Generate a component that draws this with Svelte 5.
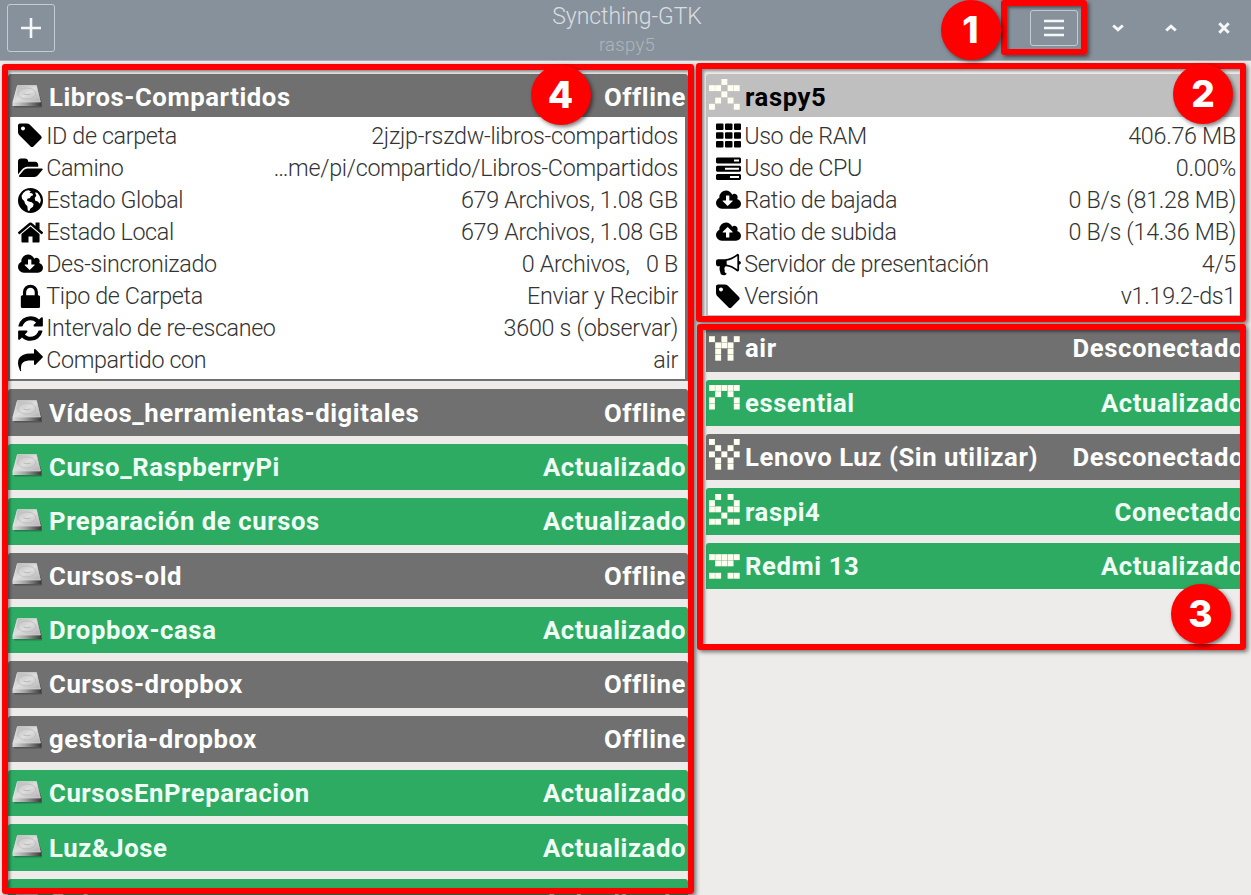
<script>
  const cloud = 'q0 159-112.5 271.5t-271.5 112.5h-1088q-185 0-316.5-131.5t-131.5-316.5q0-130 70-240t188-165q-2-30-2-43 0-212 150-362t362-150q156 0 285.5 87t188.5 231q71-62 166-62 106 0 181 75t75 181q0 76-41 138 130 31 213.5 135.5t83.5 238.5z';
  const icons = {
    tag: ['0 100 1600 1600', 'M448 448q0-53-37.5-90.5t-90.5-37.5-90.5 37.5-37.5 90.5 37.5 90.5 90.5 37.5 90.5-37.5 37.5-90.5zm1067 576q0 53-37 90l-491 492q-39 37-91 37-53 0-90-37l-715-716q-38-37-64.5-101t-26.5-117v-416q0-52 38-90t90-38h416q53 0 117 26.5t102 64.5l715 714q37 39 37 91z'],
    folder: ['0 0 1900 1792', 'M1879 952q0 31-31 66l-336 396q-43 51-120.5 86.5t-143.5 35.5h-1088q-34 0-60.5-13t-26.5-43q0-31 31-66l336-396q43-51 120.5-86.5t143.5-35.5h1088q34 0 60.5 13t26.5 43zm-343-344v160h-832q-94 0-197 47.5t-164 119.5l-337 396-5 6q0-4-.5-12.5t-.5-12.5v-960q0-92 66-158t158-66h320q92 0 158 66t66 158v32h544q92 0 158 66t66 158z'],
    globe: ['0 0 24 24', 'M12 0a12 12 0 1 0 0 24a12 12 0 0 0 0-24zM7.6 2.6L10.2 2.2L12.4 3.4L11 4.8L13.6 5L14.6 7L12.6 7.6L11.4 9.6L9 10.4L8.6 12L10.4 13L13.2 13.6L15 15.4L14.4 18L12 19.6L10.8 22L9.4 21.6L9 17.6L6.8 15L6 12.4L4 10.6L3.4 7.6L5 4.8zM16.4 4.2L18.6 4.6L20.8 7.6L22 11.6L21 15L19 13L16.6 12.2L16 9.6L17.6 7.4z'],
    home: ['100 100 1592 1592', 'M1472 992v480q0 26-19 45t-45 19h-384v-384h-256v384h-384q-26 0-45-19t-19-45v-480q0-1 .5-3t.5-3l575-474 575 474q1 2 1 6zm223-69l-62 74q-8 9-21 11h-3q-13 0-21-7l-692-577-692 577q-12 8-24 7-13-2-21-11l-62-74q-8-10-7-23.5t11-21.5l719-599q32-26 76-26t76 26l244 204v-195q0-14 9-23t23-9h192q14 0 23 9t9 23v408l219 182q10 8 11 21.5t-7 23.5z'],
    down: ['-64 0 1920 1792', 'M1216 928q0-14-9-23t-23-9h-224v-352q0-13-9.5-22.5t-22.5-9.5h-192q-13 0-22.5 9.5t-9.5 22.5v352h-224q-13 0-22.5 9.5t-9.5 22.5q0 14 9 23l352 352q9 9 23 9t23-9l351-351q10-12 10-24zm640 224' + cloud],
    up: ['-64 0 1920 1792', 'M1216 864q0-14-9-23l-352-352q-9-9-23-9t-23 9l-351 351q-10 12-10 24 0 14 9 23t23 9h224v352q0 13 9.5 22.5t22.5 9.5h192q13 0 22.5-9.5t9.5-22.5v-352h224q13 0 22.5-9.5t9.5-22.5zm640 288' + cloud],
    lock: ['150 90 1500 1500', 'M640 768h512v-192q0-106-75-181t-181-75-181 75-75 181v192zm832 96v576q0 40-28 68t-68 28h-960q-40 0-68-28t-28-68v-576q0-40 28-68t68-28h32v-192q0-184 132-316t316-132 316 132 132 316v192h32q40 0 68 28t28 68z'],
    refresh: ['120 120 1552 1552', 'M1639 1056q0 5-1 7-64 268-268 434.5t-478 166.5q-146 0-282.5-55t-243.5-157l-129 129q-19 19-45 19t-45-19-19-45v-448q0-26 19-45t45-19h448q26 0 45 19t19 45-19 45l-137 137q71 66 161 102t187 36q134 0 250-65t186-179q11-17 53-117 8-23 30-23h192q13 0 22.5 9.5t9.5 22.5zm25-800v448q0 26-19 45t-45 19h-448q-26 0-45-19t-19-45 19-45l138-138q-148-137-349-137-134 0-250 65t-186 179q-11 17-53 117-8 23-30 23h-199q-13 0-22.5-9.5t-9.5-22.5v-7q65-268 270-434.5t480-166.5q146 0 284 55.5t245 156.5l130-129q19-19 45-19t45 19 19 45z'],
    share: ['0 0 1800 1792', 'M1792 640q0 26-19 45l-512 512q-19 19-45 19t-45-19-19-45v-256h-224q-98 0-175.5 6t-154 21.5-133 42.5-105.5 69.5-80 101-48.5 138.5-17.5 181q0 55 5 123 0 6 2.5 23.5t2.5 26.5q0 15-8.5 25t-23.5 10q-16 0-28-17-7-9-13-22t-13.5-30-10.5-24q-127-285-127-451 0-199 53-333 162-403 875-403h224v-256q0-26 19-45t45-19 45 19l512 512q19 19 19 45z'],
    grid: ['0 0 25 24', 'M1 0h5.500q1 0 1 1v4.500q0 1-1 1h-5.500q-1 0-1-1v-4.500q0-1 1-1zm9 0h5.500q1 0 1 1v4.500q0 1-1 1h-5.500q-1 0-1-1v-4.500q0-1 1-1zm9 0h5q1 0 1 1v4.500q0 1-1 1h-5q-1 0-1-1v-4.500q0-1 1-1zM1 8.800h5.500q1 0 1 1v4.500q0 1-1 1h-5.500q-1 0-1-1v-4.500q0-1 1-1zm9 0h5.500q1 0 1 1v4.500q0 1-1 1h-5.500q-1 0-1-1v-4.500q0-1 1-1zm9 0h5q1 0 1 1v4.500q0 1-1 1h-5q-1 0-1-1v-4.500q0-1 1-1zM1 17.500h5.500q1 0 1 1v4.500q0 1-1 1h-5.500q-1 0-1-1v-4.500q0-1 1-1zm9 0h5.500q1 0 1 1v4.500q0 1-1 1h-5.500q-1 0-1-1v-4.500q0-1 1-1zm9 0h5q1 0 1 1v4.500q0 1-1 1h-5q-1 0-1-1v-4.500q0-1 1-1z'],
    tasks: ['0 0 25 24', 'M1 1h23l1 1v4l-1 1h-23l-1-1v-4zM18 3v2h5v-2zM1 9.300h23l1 1v4l-1 1h-23l-1-1v-4zM9 11.300v2h14v-2zM1 17.500h23l1 1v4l-1 1h-23l-1-1v-4zM14 19.500v2h9v-2z'],
    horn: ['0 60 1800 1672', 'M1664 640q53 0 90.5 37.5t37.5 90.5-37.5 90.5-90.5 37.5v384q0 52-38 90t-90 38q-417-347-812-380-58 19-91 66t-31 100.5 40 92.5q-20 33-23 65.5t6 58 33.500 55 48 50 61.500 50.500q-29 58-111.500 83t-168.500 11.500-132-55.500q-7-23-29.500-87.500t-32-94.500-23-89-15-101 3.500-98.500 22-110.500h-122q-66 0-113-47t-47-113v-192q0-66 47-113t113-47h480q435 0 896-384 52 0 90 38t38 90v384zm-128 604v-954q-394 302-768 343v270q377 42 768 341z']
  };

  const details = [
    ['tag', 'ID de carpeta', '2jzjp-rszdw-libros-compartidos'],
    ['folder', 'Camino', '…me/pi/compartido/Libros-Compartidos'],
    ['globe', 'Estado Global', '679 Archivos, 1.08 GB'],
    ['home', 'Estado Local', '679 Archivos, 1.08 GB'],
    ['down', 'Des-sincronizado', '0 Archivos,   0 B'],
    ['lock', 'Tipo de Carpeta', 'Enviar y Recibir'],
    ['refresh', 'Intervalo de re-escaneo', '3600 s (observar)'],
    ['share', 'Compartido con', 'air']
  ];
  const stats = [
    ['grid', 'Uso de RAM', '406.76 MB'],
    ['tasks', 'Uso de CPU', '0.00%'],
    ['down', 'Ratio de bajada', '0 B/s (81.28 MB)'],
    ['up', 'Ratio de subida', '0 B/s (14.36 MB)'],
    ['horn', 'Servidor de presentación', '4/5'],
    ['tag', 'Versión', 'v1.19.2-ds1']
  ];
  const folders = [
    ['Libros-Compartidos', 'Offline', details],
    ['Vídeos_herramientas-digitales', 'Offline'],
    ['Curso_RaspberryPi', 'Actualizado'],
    ['Preparación de cursos', 'Actualizado'],
    ['Cursos-old', 'Offline'],
    ['Dropbox-casa', 'Actualizado'],
    ['Cursos-dropbox', 'Offline'],
    ['gestoria-dropbox', 'Offline'],
    ['CursosEnPreparacion', 'Actualizado'],
    ['Luz&Jose', 'Actualizado'],
    ['Gulp', 'Actualizado']
  ];
  const devices = [
    ['raspy5', '', '00100 11011 00100 01010 10001', stats],
    ['air', 'Desconectado', '00000 10101 01110 01010 01010'],
    ['essential', 'Actualizado', '11111 01010 10001 10001 00000'],
    ['Lenovo Luz (Sin utilizar)', 'Desconectado', '10001 01010 10101 01010 01010'],
    ['raspi4', 'Conectado', '01010 10001 11011 00100 11011'],
    ['Redmi 13', 'Actualizado', '00000 11111 01110 00000 11011']
  ];
  const tone = (s) => (s === '' ? 'own' : s === 'Offline' || s === 'Desconectado' ? 'off' : 'on');
</script>

{#snippet rows(list)}
  <div class="body">
    {#each list as [icon, label, value]}
      <div class="row">
        <svg class="glyph" viewBox={icons[icon][0]}><path fill-rule={icon === 'home' ? 'nonzero' : 'evenodd'} d={icons[icon][1]} /></svg>
        <span>{label}</span>
        <span class="value">{value}</span>
      </div>
    {/each}
  </div>
{/snippet}

<div class="window">
  <header>
    <div class="side">
      <button class="add" aria-label="+"><svg width="20" height="20" viewBox="0 0 20 20"><path d="M10 0v20M0 10h20" stroke="#f4f6f7" stroke-width="2.600" /></svg></button>
    </div>
    <div class="titles"><div class="title">Syncthing-GTK</div><div class="sub">raspy5</div></div>
    <div class="side right">
      <button class="menu" aria-label="☰"><svg width="20" height="18" viewBox="0 0 20 18"><path d="M0 2h20M0 9h20M0 16h20" stroke="#f4f6f7" stroke-width="2.600" /></svg></button>
      <svg class="ctl" width="12" height="12" viewBox="0 0 12 12"><path d="M1.200 3.500L6 7.800L10.800 3.500" /></svg>
      <svg class="ctl" width="12" height="12" viewBox="0 0 12 12"><path d="M1.200 8.500L6 4.200L10.800 8.500" /></svg>
      <svg class="ctl" width="12" height="12" viewBox="0 0 12 12"><path d="M1.300 1.300L10.700 10.700M10.700 1.300L1.300 10.700" /></svg>
    </div>
  </header>
  <main>
    <section class="folders">
      {#each folders as [name, status, list]}
        <article class={tone(status)}>
          <div class="head">
            <svg class="disk" viewBox="0 0 30 23">
              <defs>
                <linearGradient id="top" x1="0" y1="0" x2="1" y2="1"><stop offset="0" stop-color="#b4b4b4" /><stop offset=".5" stop-color="#dedede" /><stop offset="1" stop-color="#b0b0b0" /></linearGradient>
                <linearGradient id="front" x1="0" x2="1"><stop offset="0" stop-color="#dcdcdc" /><stop offset=".45" stop-color="#a0a0a0" /><stop offset="1" stop-color="#383838" /></linearGradient>
              </defs>
              <path d="M1 20h29v2.500H3z" fill="#000" opacity=".25" />
              <path d="M5 1h20l4.500 16v4h-29v-4z" fill="url(#front)" />
              <path d="M5.500 .5h19L28.500 17H1.500z" fill="url(#top)" stroke="#e2e2e2" stroke-width=".6" />
              <ellipse cx="14.800" cy="8.500" rx="9" ry="5.500" fill="none" stroke="#b6b6b6" stroke-width=".7" />
              <path d="M11.500 9q3.500 1.500 7 0" fill="none" stroke="#b0b0b0" stroke-width=".8" />
            </svg>
            <span>{name}</span><span class="status">{status}</span>
          </div>
          {#if list}{@render rows(list)}{/if}
        </article>
      {/each}
    </section>
    <section class="devices">
      {#each devices as [name, status, bits, list]}
        <article class={tone(status)}>
          <div class="head">
            <svg class="ident" viewBox="0 0 31 31">
              {#each bits.split(' ') as line, y}
                {#each line.split('') as bit, x}
                  {#if bit === '1'}<rect x={x * 6.2} y={y * 6.2} width="5.900" height="5.900" fill="#fffff0" />{/if}
                {/each}
              {/each}
            </svg>
            <span>{name}</span><span class="status">{status}</span>
          </div>
          {#if list}{@render rows(list)}{/if}
        </article>
      {/each}
    </section>
  </main>

  <div class="frame f1"></div>
  <div class="frame f4"></div>
  <div class="frame f2"></div>
  <div class="frame f3"></div>
  <div class="badge b1">1</div>
  <div class="badge b2">2</div>
  <div class="badge b3">3</div>
  <div class="badge b4">4</div>
</div>

<style>
  :global(body) { background: #edecea; overflow: hidden; }
  .window { position: relative; width: 1251px; height: 895px; overflow: hidden; background: #edecea; font-family: Roboto, sans-serif; display: flex; flex-direction: column; }
  header { box-sizing: border-box; height: 61px; flex: none; display: grid; grid-template-columns: 1fr auto 1fr; background: #87919b; border-bottom: 1px solid #a9afb5; }
  .titles { text-align: center; font-weight: 300; padding: 1px 0 0 3px; }
  .title { font-size: 23px; line-height: 32px; color: #d9dde0; letter-spacing: -.05px; }
  .sub { font-size: 18.500px; line-height: 24px; color: #aeb5bb; letter-spacing: .3px; }
  .side { display: flex; align-items: center; padding: 0 0 4px 7px; }
  .right { justify-content: flex-end; padding: 0 21px 4px 0; gap: 41px; }
  button { box-sizing: border-box; padding: 0; background: none; border: 1.500px solid #c3ccd1; border-radius: 3px; display: flex; align-items: center; justify-content: center; }
  .add { width: 48px; height: 48px; }
  .menu { width: 48px; height: 36px; margin-right: -6.500px; }
  .ctl path { fill: none; stroke: #f4f6f7; stroke-width: 3; }
  main { flex: 1; min-height: 0; display: flex; padding-top: 13px; gap: 18px; }
  section { display: flex; flex-direction: column; gap: 8px; }
  .folders { width: 680px; margin-left: 8px; }
  .devices { width: 539px; }
  article { flex: none; border-radius: 3px 3px 0 0; background: var(--c); }
  .off { --c: #707070; color: #fff; }
  .on { --c: #2dab63; color: #effff5; }
  .own { --c: #bfbfbf; color: #000; }
  .head { height: 46.400px; display: flex; align-items: center; font-weight: 700; font-size: 25.700px; letter-spacing: .57px; white-space: pre; }
  .status, .value { margin-left: auto; }
  .status { padding-right: 2px; }
  .devices .status { margin-right: -1px; }
  .disk { width: 30px; height: 23px; margin: 0 7px 2px 4px; }
  .ident { width: 31px; height: 31px; margin: 0 5px 5px 3px; }
  .body { margin: -3px 3px 0 2px; background: #fff; color: #333; padding: 2.500px 7px 2.700px 8px; }
  .devices .body { padding-right: 10px; margin-right: -1px; }
  .folders article:first-child, .devices article:first-child { padding-bottom: 2px; }
  .row { height: 32.100px; display: flex; align-items: center; font-weight: 300; font-size: 23.300px; letter-spacing: -.35px; white-space: pre; }
  .row span { padding-bottom: .4px; }
  .row .value { letter-spacing: -.28px; }
  .glyph { width: 25px; height: 25px; margin-right: 3.200px; fill: #000; }
  .frame { position: absolute; box-sizing: border-box; border: 6px solid #f00; border-radius: 3px; box-shadow: 2px 2px 4px #0008, inset 2px 2px 3px #0006; }
  .f1 { left: 1001px; top: 0; width: 86px; height: 55px; }
  .f2 { left: 696px; top: 63px; width: 550px; height: 259px; }
  .f3 { left: 697px; top: 324px; width: 549px; height: 326px; }
  .f4 { left: 2px; top: 64px; width: 692px; height: 830px; }
  .badge { position: absolute; width: 60px; height: 60px; border-radius: 50%; background: #f00; color: #fff; box-shadow: 2px 2px 4px #0008; font: 800 37px/60px Inter, sans-serif; text-align: center; }
  .b1 { left: 940.500px; top: 0; }
  .b2 { left: 1173px; top: 63.500px; }
  .b3 { left: 1170.500px; top: 584px; }
  .b4 { left: 530.500px; top: 64.500px; }
</style>
